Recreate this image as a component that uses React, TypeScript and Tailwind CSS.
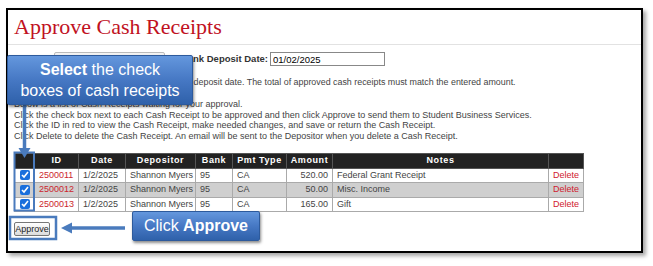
import React from "react";

// Cash receipts waiting for approval.
const RECEIPTS = [
  { id: "2500011", date: "1/2/2025", depositor: "Shannon Myers", bank: "95", type: "CA", amount: "520.00", notes: "Federal Grant Receipt" },
  { id: "2500012", date: "1/2/2025", depositor: "Shannon Myers", bank: "95", type: "CA", amount: "50.00", notes: "Misc. Income" },
  { id: "2500013", date: "1/2/2025", depositor: "Shannon Myers", bank: "95", type: "CA", amount: "165.00", notes: "Gift" },
];

const ANNOT = "#4a7bbd";

function Callout({ className, children }: { className: string; children: React.ReactNode }) {
  return (
    <div
      className={`absolute flex flex-col items-center justify-center rounded-[2px] border border-[#2d5a9c] bg-linear-to-b from-[#6497dd] via-[#4678c4] to-[#2f61aa] text-white shadow-[1px_2px_3px_rgba(0,0,0,0.45)] ${className}`}
    >
      {children}
    </div>
  );
}

export default function App() {
  return (
    <div className="relative h-[266px] w-[653px] overflow-hidden bg-white font-['Liberation_Sans',Arial,sans-serif]">
      {/* Screenshot frame */}
      <div className="ml-[6px] mt-[8px] h-[245px] w-[637px] border-2 border-black bg-white shadow-[3px_3px_4px_rgba(0,0,0,0.35)]">
        <div className="h-[35px] border-b border-[#e2e2e2] pl-[6px] pt-[4.5px]">
          <h1 className="font-['Liberation_Serif','Times_New_Roman',serif] text-[22px] leading-[24px] text-[#c1121f]">
            Approve Cash Receipts
          </h1>
        </div>

        <div className="pl-[6px] text-[9px] text-[#444]">
          <div className="mt-[7px] flex h-[14px] items-center">
            <div className="ml-[40px] h-[14px] w-[111px] rounded-[2px] border border-[#bbb] bg-[#f3f3f3]" />
            <label className="w-[103px] text-right text-[9.5px] font-bold text-[#333]">Bank Deposit Date:</label>
            <input
              readOnly
              value="01/02/2025"
              className="ml-[2px] h-[14px] w-[115px] border border-[#888] px-[2px] text-[9.5px] leading-[12px] text-black outline-none"
            />
          </div>

          <p className="mt-[10.5px] leading-[10.5px] text-[8.9px]">
            Enter the total deposit amount and your bank deposit date. The total of approved cash receipts must match the entered amount.
          </p>
          <div className="mt-[12px] leading-[10.5px]">
            <p>Below is a list of Cash Receipts waiting for your approval.</p>
            <p>Click the check box next to each Cash Receipt to be approved and then click Approve to send them to Student Business Services.</p>
            <p>Click the ID in red to view the Cash Receipt, make needed changes, and save or return the Cash Receipt.</p>
            <p>Click Delete to delete the Cash Receipt. An email will be sent to the Depositor when you delete a Cash Receipt.</p>
          </div>

          <table className="mt-[12px] w-[569px] table-fixed border-collapse text-[9px] text-[#444]">
            <colgroup>
              <col className="w-[20px]" />
              <col className="w-[44px]" />
              <col className="w-[47px]" />
              <col className="w-[70px]" />
              <col className="w-[37px]" />
              <col className="w-[54px]" />
              <col className="w-[46px]" />
              <col className="w-[216px]" />
              <col className="w-[35px]" />
            </colgroup>
            <thead>
              <tr className="h-[14px] bg-[#222] text-[9px] font-bold tracking-[0.6px] text-white">
                <th className="border border-[#555]" />
                <th className="border border-[#555]">ID</th>
                <th className="border border-[#555]">Date</th>
                <th className="border border-[#555]">Depositor</th>
                <th className="border border-[#555]">Bank</th>
                <th className="border border-[#555]">Pmt Type</th>
                <th className="border border-[#555]">Amount</th>
                <th className="border border-[#555]">Notes</th>
                <th className="border border-[#555]" />
              </tr>
            </thead>
            <tbody>
              {RECEIPTS.map((r, i) => (
                <tr key={r.id} className={`h-[14.3px] ${i === 1 ? "bg-[#cfcfcf]" : "bg-white"}`}>
                  <td className="border border-[#aaa] p-0 text-center leading-none">
                    <input type="checkbox" readOnly checked className="m-0 h-[10px] w-[10px] align-middle accent-[#1a6fdc]" />
                  </td>
                  <td className="border border-[#aaa] px-[4px] text-[#cc1f2d]">{r.id}</td>
                  <td className="border border-[#aaa] px-[4px]">{r.date}</td>
                  <td className="border border-[#aaa] px-[4px] whitespace-nowrap">{r.depositor}</td>
                  <td className="border border-[#aaa] px-[4px]">{r.bank}</td>
                  <td className="border border-[#aaa] px-[4px]">{r.type}</td>
                  <td className="border border-[#aaa] px-[4px] text-right">{r.amount}</td>
                  <td className="border border-[#aaa] px-[4px]">{r.notes}</td>
                  <td className="border border-[#aaa] px-[2px] text-center text-[#d0202e]">Delete</td>
                </tr>
              ))}
            </tbody>
          </table>

          <button className="mt-[10px] h-[14px] w-[36px] rounded-[2px] border border-[#777] bg-linear-to-b from-white to-[#dcdcdc] p-0 text-[9px] leading-[12px] text-[#222]">
            Approve
          </button>
        </div>
      </div>

      {/* Annotation overlay: arrows and highlight boxes */}
      <svg className="pointer-events-none absolute inset-0" width="653" height="266" viewBox="0 0 653 266">
        <rect x="14.5" y="152.5" width="19.5" height="58" fill="none" stroke={ANNOT} strokeWidth="2" />
        <line x1="24.5" y1="104" x2="24.5" y2="149" stroke={ANNOT} strokeWidth="3.5" />
        <polygon points="18.5,148 30.5,148 24.5,158" fill={ANNOT} />

        <rect x="10" y="217" width="46" height="22" fill="none" stroke={ANNOT} strokeWidth="2.5" />
        <line x1="125" y1="228" x2="71" y2="228" stroke={ANNOT} strokeWidth="3.5" />
        <polygon points="72,222.5 72,233.5 61,228" fill={ANNOT} />
      </svg>

      <Callout className="left-[7px] top-[55px] h-[50px] w-[186px] text-[16px] leading-[21px]">
        <span>
          <b>Select</b> the check
        </span>
        <span>boxes of cash receipts</span>
      </Callout>

      <Callout className="left-[132px] top-[211px] h-[30px] w-[128px] text-[16px] leading-[20px]">
        <span>
          Click <b>Approve</b>
        </span>
      </Callout>
    </div>
  );
}
